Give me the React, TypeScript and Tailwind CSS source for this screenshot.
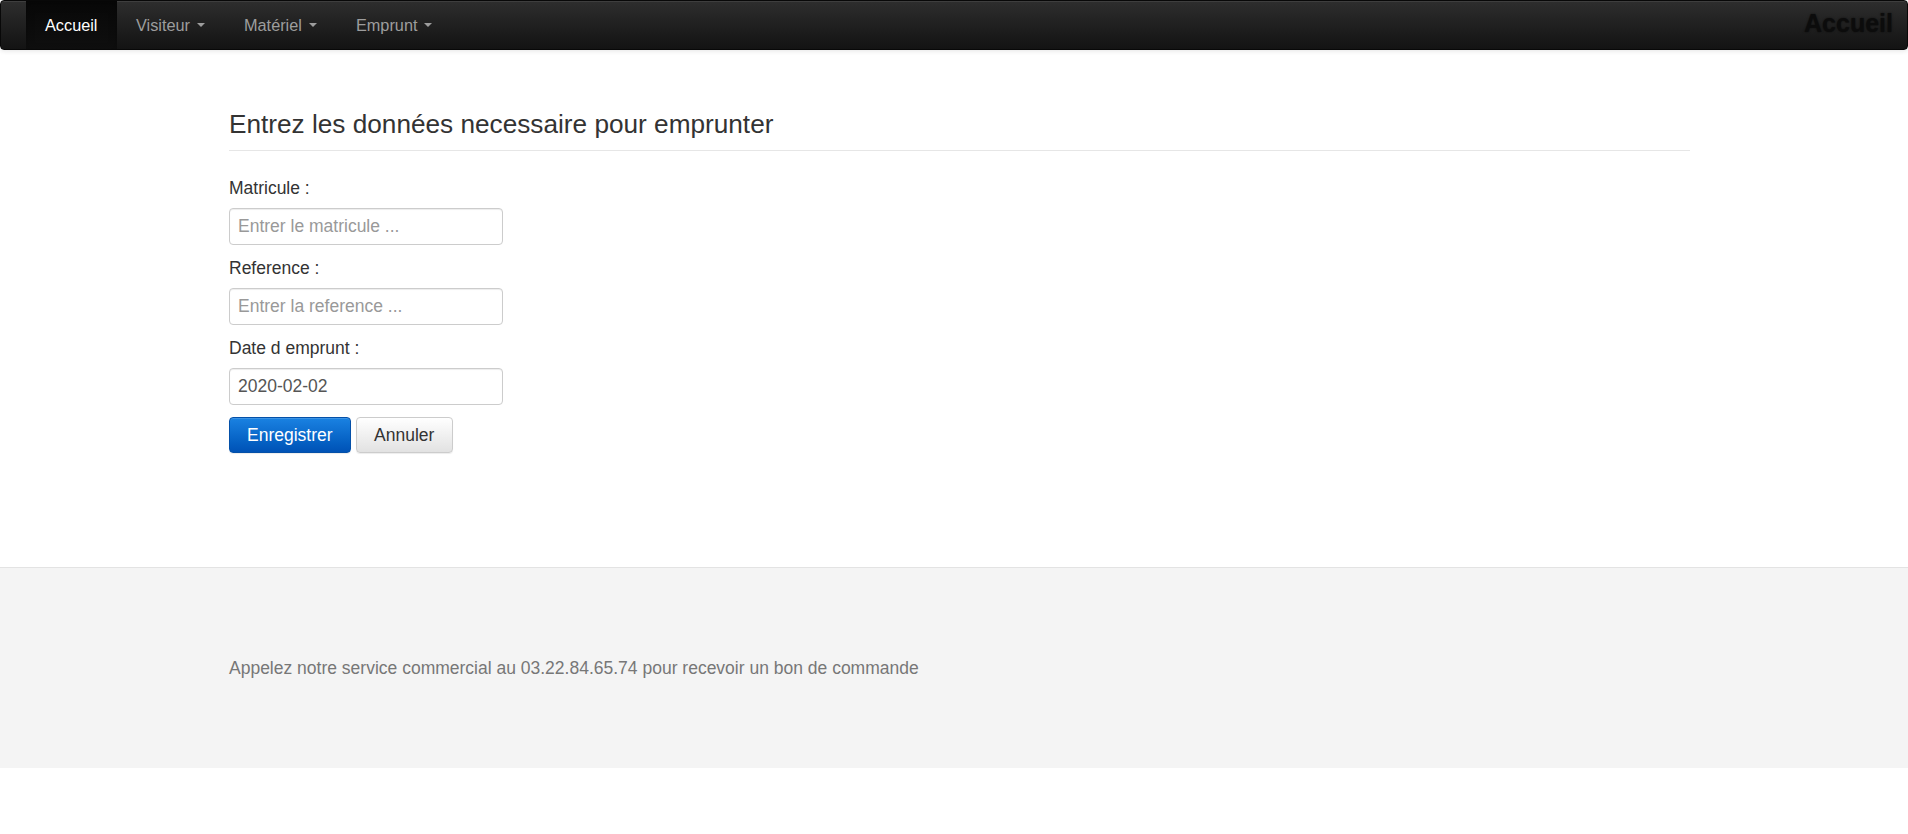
import React from "react";

function Caret() {
  return (
    <span className="ml-[7px] inline-block h-0 w-0 border-x-[4px] border-t-[4px] border-x-transparent border-t-[#9d9d9d] align-middle" />
  );
}

export default function App() {
  const font = { fontFamily: '"Liberation Sans", Arial, Helvetica, sans-serif' };
  return (
    <div className="min-h-[834px] bg-white text-[#333]" style={font}>
      {/* Navbar */}
      <nav className="flex h-[50px] items-stretch justify-between rounded-[4px] border border-[#080808] bg-gradient-to-b from-[#2e2e2e] to-[#131313] shadow-[inset_0_1px_0_rgba(255,255,255,0.08),0_1px_5px_rgba(0,0,0,0.1)]">
        <ul className="ml-[25px] flex items-stretch text-[16.3px]">
          <li className="flex items-center bg-gradient-to-b from-[#080808] to-[#0f0f0f] px-[19px] text-white shadow-[inset_0_3px_9px_rgba(0,0,0,0.25)]">
            Accueil
          </li>
          <li className="flex items-center px-[19.5px] text-[#9d9d9d]">
            Visiteur
            <Caret />
          </li>
          <li className="flex items-center px-[19.5px] text-[#9d9d9d]">
            Matériel
            <Caret />
          </li>
          <li className="flex items-center px-[19.5px] text-[#9d9d9d]">
            Emprunt
            <Caret />
          </li>
        </ul>
        <div className="mr-[14px] flex items-center pb-[2px] text-[25px] font-bold text-[#0c0c0c] [text-shadow:0_0_2px_rgba(0,0,0,0.6)]">
          Accueil
        </div>
      </nav>

      {/* Content */}
      <main className="ml-[229px] w-[1461px] pt-[60px] pb-[114px]">
        <div className="border-b border-[#e6e6e6] pb-[11px]">
          <h3 className="text-[26.2px] leading-[1.1] text-[#333]">
            Entrez les données necessaire pour emprunter
          </h3>
        </div>

        <form className="mt-[25px] flex flex-col text-[17.5px]">
          <label className="leading-[25px]">Matricule :</label>
          <input
            className="mt-[7px] h-[37px] w-[274px] rounded-[4px] border border-[#ccc] px-[8px] text-[17.5px] text-[#555] shadow-[inset_0_1px_1px_rgba(0,0,0,0.075)] outline-none placeholder:text-[#999]"
            placeholder="Entrer le matricule ..."
          />
          <label className="mt-[11px] leading-[25px]">Reference :</label>
          <input
            className="mt-[7px] h-[37px] w-[274px] rounded-[4px] border border-[#ccc] px-[8px] text-[17.5px] text-[#555] shadow-[inset_0_1px_1px_rgba(0,0,0,0.075)] outline-none placeholder:text-[#999]"
            placeholder="Entrer la reference ..."
          />
          <label className="mt-[11px] leading-[25px]">Date d emprunt :</label>
          <input
            className="mt-[7px] h-[37px] w-[274px] rounded-[4px] border border-[#ccc] px-[8px] text-[17.5px] text-[#555] shadow-[inset_0_1px_1px_rgba(0,0,0,0.075)] outline-none"
            defaultValue="2020-02-02"
          />
          <div className="mt-[12px] flex gap-[5px]">
            <button
              type="button"
              className="h-[36px] rounded-[4px] border border-[#0450a8] bg-gradient-to-b from-[#1a82e2] to-[#0052b6] px-[17px] text-[17.5px] text-white shadow-[inset_0_1px_0_rgba(255,255,255,0.15),0_1px_1px_rgba(0,0,0,0.075)]"
            >
              Enregistrer
            </button>
            <button
              type="button"
              className="h-[36px] rounded-[4px] border border-[#ccc] bg-gradient-to-b from-white to-[#e2e2e2] px-[17.5px] text-[17.5px] text-[#333] shadow-[inset_0_1px_0_rgba(255,255,255,0.15),0_1px_1px_rgba(0,0,0,0.075)]"
            >
              Annuler
            </button>
          </div>
        </form>
      </main>

      {/* Footer */}
      <footer className="flex h-[201px] items-center border-t border-[#e3e3e3] bg-[#f4f4f4]">
        <p className="ml-[229px] mt-[1px] text-[17.5px] text-[#777]">
          Appelez notre service commercial au 03.22.84.65.74 pour recevoir un bon de commande
        </p>
      </footer>
    </div>
  );
}
